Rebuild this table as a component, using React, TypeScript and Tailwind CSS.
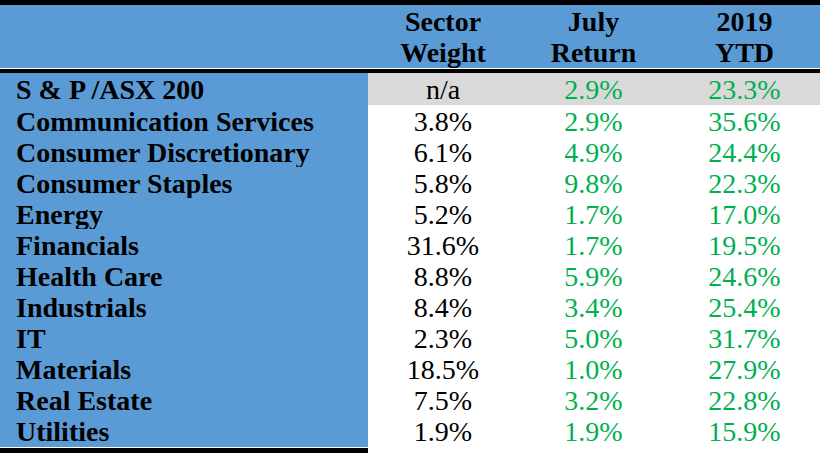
const rows: [string, string, string, string][] = [
  ["S & P /ASX 200", "n/a", "2.9%", "23.3%"],
  ["Communication Services", "3.8%", "2.9%", "35.6%"],
  ["Consumer Discretionary", "6.1%", "4.9%", "24.4%"],
  ["Consumer Staples", "5.8%", "9.8%", "22.3%"],
  ["Energy", "5.2%", "1.7%", "17.0%"],
  ["Financials", "31.6%", "1.7%", "19.5%"],
  ["Health Care", "8.8%", "5.9%", "24.6%"],
  ["Industrials", "8.4%", "3.4%", "25.4%"],
  ["IT", "2.3%", "5.0%", "31.7%"],
  ["Materials", "18.5%", "1.0%", "27.9%"],
  ["Real Estate", "7.5%", "3.2%", "22.8%"],
  ["Utilities", "1.9%", "1.9%", "15.9%"],
];

export default function App() {
  return (
    <div className="w-[820px] h-[453px] bg-white overflow-hidden [font-family:'Liberation_Serif','Times_New_Roman',serif] text-[28px] leading-[31px] text-black">
      <div className="h-[5px] bg-black" />
      {/* header */}
      <div className="h-[63px] bg-[#5b9bd5] grid grid-cols-[368px_150px_151px_151px] items-center font-bold text-center">
        <div />
        <div>Sector<br />Weight</div>
        <div>July<br />Return</div>
        <div>2019<br />YTD</div>
      </div>
      <div className="h-px bg-white" />
      <div className="h-[4px] bg-black" />
      {/* body */}
      <div className="grid grid-cols-[368px_150px_151px_151px]">
        {rows.map((r, i) => {
          const h = i === 0 ? "h-[32px] pt-[2px]" : "h-[31px] pt-[2px]";
          const gray = i === 0 ? "bg-[#d9d9d9]" : "";
          return (
            <div key={r[0]} className="contents">
              <div className={`bg-[#5b9bd5] font-bold pl-[16px] leading-[29px] ${h}`}>{r[0]}</div>
              <div className={`text-center leading-[29px] ${h} ${gray}`}>{r[1]}</div>
              <div className={`text-center leading-[29px] text-[#00b050] ${h} ${gray}`}>{r[2]}</div>
              <div className={`text-center leading-[29px] text-[#00b050] ${h} ${gray}`}>{r[3]}</div>
            </div>
          );
        })}
        <div className="h-px bg-[#5b9bd5]" />
      </div>
      <div className="w-[368px] h-px bg-white" />
      <div className="w-[368px] h-[5px] bg-black" />
    </div>
  );
}
